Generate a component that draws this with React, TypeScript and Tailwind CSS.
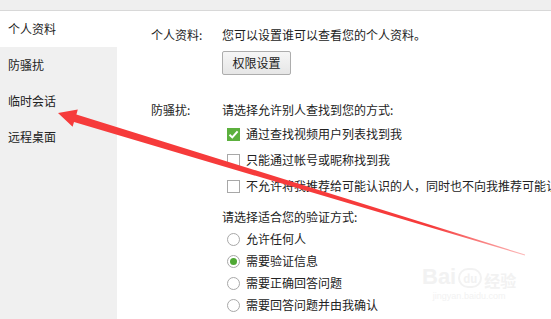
import React from 'react';

const font = { fontFamily: '"Noto Sans CJK SC", "Noto Sans", sans-serif' };

const sideItems = ['个人资料', '防骚扰', '临时会话', '远程桌面'];

const findOptions = [
  { label: '通过查找视频用户列表找到我', checked: true },
  { label: '只能通过帐号或昵称找到我', checked: false },
  { label: '不允许将我推荐给可能认识的人，同时也不向我推荐可能认识的人', checked: false },
];

const verifyOptions = [
  { label: '允许任何人', checked: false },
  { label: '需要验证信息', checked: true },
  { label: '需要正确回答问题', checked: false },
  { label: '需要回答问题并由我确认', checked: false },
];

const CheckBox: React.FC<{ checked: boolean }> = ({ checked }) =>
  checked ? (
    <span className="flex h-[13px] w-[13px] shrink-0 items-center justify-center bg-[#5cb03e]">
      <svg width="11" height="11" viewBox="0 0 11 11">
        <path d="M1.5 5.8 L4.3 8.4 L9.6 2.4" fill="none" stroke="#fff" strokeWidth="2" />
      </svg>
    </span>
  ) : (
    <span className="h-[13px] w-[13px] shrink-0 border border-[#a8a8a8] bg-white" />
  );

const Radio: React.FC<{ checked: boolean }> = ({ checked }) => (
  <span className="flex h-[13px] w-[13px] shrink-0 items-center justify-center rounded-full border border-[#a8a8a8] bg-white">
    {checked && <span className="h-[7px] w-[7px] rounded-full bg-[#4fa834]" />}
  </span>
);

const Arrow: React.FC = () => (
  <svg className="pointer-events-none absolute left-0 top-0" width="551" height="319" viewBox="0 0 551 319">
    <defs>
      <linearGradient id="fade" x1="58" y1="113" x2="525" y2="255" gradientUnits="userSpaceOnUse">
        <stop offset="0" stopColor="#f63b3b" />
        <stop offset="0.8" stopColor="#f63b3b" />
        <stop offset="1" stopColor="#f63b3b" stopOpacity="0.35" />
      </linearGradient>
    </defs>
    <polygon
      points="58,113 77.8,109.6 76.4,114.4 525.1,254.5 524.9,255.5 74,122 72.6,126.8"
      fill="url(#fade)"
    />
  </svg>
);

export default function App() {
  return (
    <div className="relative h-[319px] w-[551px] overflow-hidden bg-white text-[12px] leading-[18px] text-[#222]" style={font}>
      <div className="h-[11px] border-b border-[#d8d8d8] bg-[#efefef]" />
      <div className="flex h-[308px]">
        {/* sidebar */}
        <div className="w-[117px] shrink-0 bg-[#f0f0f0]">
          {sideItems.map((item, i) => (
            <div
              key={item}
              className={`flex h-[36px] items-center pl-[8px] ${i === 0 ? 'bg-white' : ''}`}
            >
              {item}
            </div>
          ))}
        </div>

        {/* content */}
        <div className="min-w-0 flex-1 pl-[34px] pt-[15px]">
          <div className="flex">
            <div className="w-[71px] shrink-0">个人资料:</div>
            <div className="whitespace-nowrap">您可以设置谁可以查看您的个人资料。</div>
          </div>
          <div className="ml-[71px] mt-[7px]">
            <button className="h-[24px] w-[69px] rounded-[2px] border border-[#adadad] bg-gradient-to-b from-[#f6f6f6] to-[#e6e6e6] text-[12px] text-[#222]">
              权限设置
            </button>
          </div>

          <div className="mt-[26px] flex">
            <div className="w-[71px] shrink-0">防骚扰:</div>
            <div className="min-w-0 flex-1">
              <div className="whitespace-nowrap">请选择允许别人查找到您的方式:</div>
              <div className="mt-[2px]">
                {findOptions.map((o) => (
                  <div key={o.label} className="flex h-[26px] items-center gap-[6px] whitespace-nowrap pl-[5px]">
                    <CheckBox checked={o.checked} />
                    <span>{o.label}</span>
                  </div>
                ))}
              </div>
              <div className="mt-[9px] whitespace-nowrap">请选择适合您的验证方式:</div>
              <div className="mt-[2px]">
                {verifyOptions.map((o) => (
                  <div key={o.label} className="flex h-[22px] items-center gap-[6px] whitespace-nowrap pl-[5px]">
                    <Radio checked={o.checked} />
                    <span>{o.label}</span>
                  </div>
                ))}
              </div>
            </div>
          </div>
        </div>
      </div>

      {/* watermark */}
      <div className="pointer-events-none absolute left-[422px] top-[266px] flex flex-col items-center text-[#f2f2f2]">
        <div className="flex items-end leading-none">
          <span className="text-[22px] font-bold" style={{ fontFamily: '"Liberation Sans", sans-serif' }}>Bai</span>
          <span className="mx-[2px] flex h-[20px] w-[24px] items-center justify-center rounded-full border-2 border-[#f2f2f2] text-[11px] font-bold">du</span>
          <span className="text-[16px] font-bold">经验</span>
        </div>
        <div className="mt-[4px] text-[9px] leading-none" style={{ fontFamily: '"Liberation Sans", sans-serif' }}>jingyan.baidu.com</div>
      </div>

      <Arrow />
    </div>
  );
}
